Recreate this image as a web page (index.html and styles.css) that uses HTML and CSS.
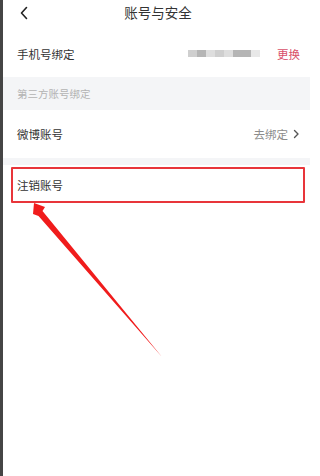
FILE: index.html
```html
<!DOCTYPE html>
<html lang="zh">
<head>
<meta charset="utf-8">
<link rel="stylesheet" href="styles.css">
</head>
<body>
<div class="page">
  <header class="topbar">
    <span class="back">
      <svg width="10" height="14" viewBox="0 0 10 14"><path d="M7.5 1.5 L2.5 7 L7.5 12.5" fill="none" stroke="#222" stroke-width="1.6" stroke-linecap="round" stroke-linejoin="round"/></svg>
    </span>
    <h1 class="title">账号与安全</h1>
  </header>
  <div class="row row-phone">
    <span class="label">手机号绑定</span>
    <span class="right">
      <span class="blur">
        <i class="b1"></i><i class="b2"></i><i class="b3"></i><i class="b1"></i><i class="b3"></i><i class="b2"></i><i class="b2"></i><i class="b4"></i>
      </span>
      <span class="change">更换</span>
    </span>
  </div>
  <div class="section">第三方账号绑定</div>
  <div class="row row-weibo">
    <span class="label">微博账号</span>
    <span class="right muted">去绑定
      <svg width="8" height="10" viewBox="0 0 8 10"><path d="M2.5 1.5 L6 5 L2.5 8.5" fill="none" stroke="#555" stroke-width="1.4" stroke-linecap="round" stroke-linejoin="round"/></svg>
    </span>
  </div>
  <div class="gap"></div>
  <div class="row row-cancel">
    <span class="label">注销账号</span>
    <span class="highlight"></span>
  </div>
  <div class="rest"></div>
  <svg class="arrow" width="310" height="476" viewBox="0 0 310 476">
    <polygon points="34,203 45,207 42.5,211 162,357 38.5,216 33,214" fill="#f01c1c"/>
  </svg>
</div>
</body>
</html>
```
FILE: styles.css
```css
* { box-sizing: border-box; margin: 0; padding: 0; }
html, body { width: 310px; height: 476px; overflow: hidden; background: #fff; }
body {
  font-family: "Noto Sans CJK SC", "Noto Sans", sans-serif;
  color: #333;
}
.page {
  position: relative;
  width: 310px;
  height: 476px;
  border-left: 3px solid #454545;
  display: flex;
  flex-direction: column;
}
.topbar {
  height: 30px;
  display: flex;
  align-items: center;
  justify-content: center;
  position: relative;
}
.back {
  position: absolute;
  left: 16px;
  top: 6px;
  display: flex;
}
.title {
  font-size: 13.5px;
  font-weight: 400;
  color: #333;
  margin-top: -6px;
  margin-left: 3px;
}
.row {
  display: flex;
  align-items: center;
  justify-content: space-between;
  padding: 0 10px 0 14px;
  font-size: 11.5px;
  position: relative;
}
.row-phone { height: 47px; }
.row-weibo { height: 48px; }
.row-cancel { height: 40px; }
.label { color: #333; }
.right { display: flex; align-items: center; gap: 4px; }
.muted { color: #8c8c8c; font-size: 11.5px; }
.blur { display: flex; margin-right: 13px; height: 7px; }
.blur i { display: block; width: 9px; height: 7px; }
.b1 { background: #cfcfcf; }
.b2 { background: #b5b5b5; }
.b3 { background: #dedede; }
.b4 { background: #e8e8e8; }
.change { color: #d8506a; font-size: 11.5px; }
.section {
  height: 33px;
  background: #f4f5f7;
  padding-left: 14px;
  display: flex;
  align-items: center;
  font-size: 10.5px;
  color: #b3b3b3;
}
.gap { height: 7px; background: #f4f5f7; }
.highlight {
  position: absolute;
  left: 8px;
  right: 5px;
  top: 2px;
  bottom: 2px;
  border: 2px solid #e8353a;
  border-radius: 1px;
}
.rest { flex: 1; }
.arrow { position: absolute; left: -3px; top: 0; pointer-events: none; }
```
